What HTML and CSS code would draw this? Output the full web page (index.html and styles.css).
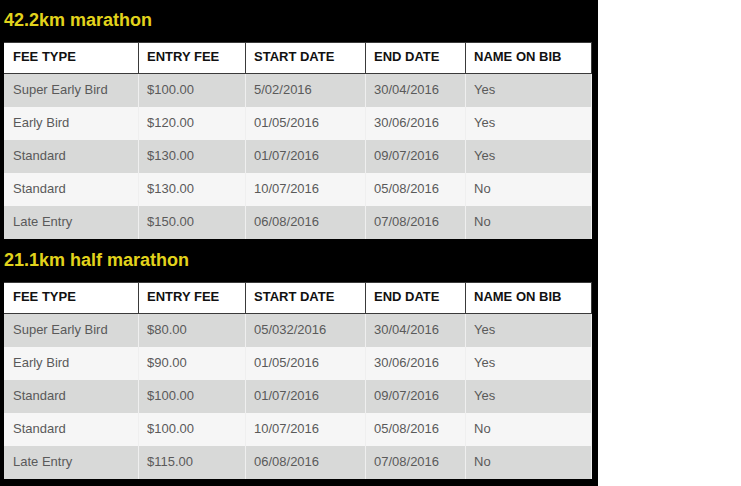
FILE: index.html
```html
<!DOCTYPE html>
<html>
<head>
<meta charset="utf-8">
<link rel="stylesheet" href="styles.css">
</head>
<body>
<div class="panel">
  <h2 class="title">42.2km marathon</h2>
  <table class="fees">
    <colgroup><col class="c1"><col class="c2"><col class="c3"><col class="c4"><col class="c5"></colgroup>
    <thead><tr><th>FEE TYPE</th><th>ENTRY FEE</th><th>START DATE</th><th>END DATE</th><th>NAME ON BIB</th></tr></thead>
    <tbody>
      <tr><td>Super Early Bird</td><td>$100.00</td><td>5/02/2016</td><td>30/04/2016</td><td>Yes</td></tr>
      <tr><td>Early Bird</td><td>$120.00</td><td>01/05/2016</td><td>30/06/2016</td><td>Yes</td></tr>
      <tr><td>Standard</td><td>$130.00</td><td>01/07/2016</td><td>09/07/2016</td><td>Yes</td></tr>
      <tr><td>Standard</td><td>$130.00</td><td>10/07/2016</td><td>05/08/2016</td><td>No</td></tr>
      <tr><td>Late Entry</td><td>$150.00</td><td>06/08/2016</td><td>07/08/2016</td><td>No</td></tr>
    </tbody>
  </table>
  <h2 class="title">21.1km half marathon</h2>
  <table class="fees">
    <colgroup><col class="c1"><col class="c2"><col class="c3"><col class="c4"><col class="c5"></colgroup>
    <thead><tr><th>FEE TYPE</th><th>ENTRY FEE</th><th>START DATE</th><th>END DATE</th><th>NAME ON BIB</th></tr></thead>
    <tbody>
      <tr><td>Super Early Bird</td><td>$80.00</td><td>05/032/2016</td><td>30/04/2016</td><td>Yes</td></tr>
      <tr><td>Early Bird</td><td>$90.00</td><td>01/05/2016</td><td>30/06/2016</td><td>Yes</td></tr>
      <tr><td>Standard</td><td>$100.00</td><td>01/07/2016</td><td>09/07/2016</td><td>Yes</td></tr>
      <tr><td>Standard</td><td>$100.00</td><td>10/07/2016</td><td>05/08/2016</td><td>No</td></tr>
      <tr><td>Late Entry</td><td>$115.00</td><td>06/08/2016</td><td>07/08/2016</td><td>No</td></tr>
    </tbody>
  </table>
</div>
</body>
</html>
```
FILE: styles.css
```css
html, body {
  margin: 0;
  padding: 0;
  background: #ffffff;
}
.panel {
  width: 598px;
  height: 486px;
  box-sizing: border-box;
  background: #000000;
  padding: 0 6px 6px 4px;
  font-family: "Liberation Sans", Arial, sans-serif;
}
.title {
  margin: 0 0 11px 0;
  padding-top: 9px;
  font-size: 18px;
  line-height: 22px;
  font-weight: bold;
  color: #e2d31c;
}
.fees {
  width: 588px;
  border-collapse: separate;
  border-spacing: 0;
  table-layout: fixed;
  margin-bottom: 1px;
  font-size: 13px;
}
.c1 { width: 135px; }
.c2 { width: 107px; }
.c3 { width: 120px; }
.c4 { width: 100px; }
.c5 { width: 126px; }
.fees th {
  background: #ffffff;
  color: #111111;
  font-weight: bold;
  text-align: left;
  padding: 0 9px 2px 8px;
  line-height: 28px;
  border-top: 1px solid #3a3a3a;
  border-bottom: 1px solid #3a3a3a;
  border-right: 1px solid #3a3a3a;
  white-space: nowrap;
}
.fees td {
  color: #5a5a5a;
  padding: 1px 9px 2px 8px;
  line-height: 30px;
  border-right: 1px solid #efefef;
  white-space: nowrap;
}
.fees th:first-child,
.fees td:first-child {
  padding-left: 9px;
}
.fees tbody tr:nth-child(odd) td {
  background: #d8d9d8;
}
.fees tbody tr:nth-child(even) td {
  background: #f6f6f6;
}
```
